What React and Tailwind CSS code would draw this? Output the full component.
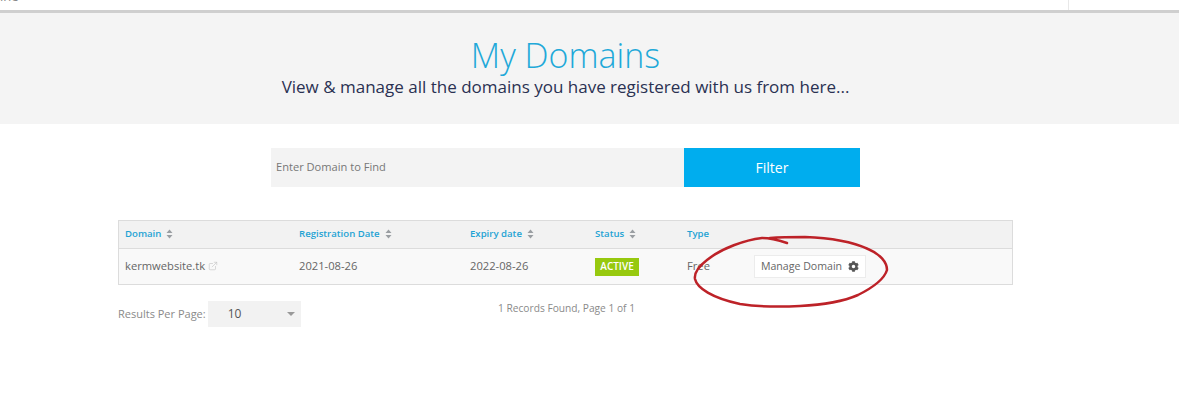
import { ExternalLink } from "lucide-react";
import { FaCog } from "react-icons/fa";

function SortIcon() {
  return (
    <svg width="7" height="10" viewBox="0 0 7 10" className="ml-[5px] inline-block">
      <path d="M3.5 0.5 L6.5 4 H0.5 Z M3.5 9.5 L6.5 6 H0.5 Z" fill="#9a9ea2" />
    </svg>
  );
}

function HeadCell({ label, sort = true, className }) {
  return (
    <div className={`flex items-center text-[9.6px] font-semibold text-[#1fa3d4] ${className}`}>
      {label}
      {sort && <SortIcon />}
    </div>
  );
}

export default function App() {
  return (
    <div className="relative h-[400px] w-[1179px] overflow-hidden bg-white font-['Open_Sans',sans-serif]">
      <div className="flex h-[10px] justify-end overflow-hidden bg-white">
        <span className="absolute left-0 top-[-13px] text-[13px] text-[#888]">ine</span>
        <div className="mr-[110px] w-px bg-[#e8e8e8]" />
      </div>
      <div className="h-[3px] bg-[#cfcfcf]" />

      <div className="h-[111px] bg-[#f4f4f4]">
        <div className="ml-[118px] w-[895px] pt-[19px] text-center">
          <h1 className="text-[34px] font-light leading-[46px] text-[#1fa9d9]">My Domains</h1>
          <p className="text-[17px] leading-[18px] text-[#2a3152]">
            View &amp; manage all the domains you have registered with us from here...
          </p>
        </div>
      </div>

      <div className="ml-[271px] mt-[24px] flex h-[39px] w-[589px]">
        <div className="flex w-[413px] items-center bg-[#f3f3f3] pl-[5px] text-[11.1px] text-[#777]">
          Enter Domain to Find
        </div>
        <div className="flex flex-1 items-center justify-center bg-[#00adee] text-[14px] text-white">
          Filter
        </div>
      </div>

      <div className="ml-[118px] mt-[33px] w-[895px] border border-[#dcdcdc]">
        <div className="flex h-[28px] items-center border-b border-[#dcdcdc] bg-[#f2f2f2]">
          <HeadCell label="Domain" className="ml-[6px] w-[174px]" />
          <HeadCell label="Registration Date" className="w-[171px]" />
          <HeadCell label="Expiry date" className="w-[125px]" />
          <HeadCell label="Status" className="w-[92px]" />
          <HeadCell label="Type" sort={false} />
        </div>
        <div className="flex h-[35px] items-center bg-[#f9f9f9] text-[11.2px] text-[#666]">
          <div className="ml-[6px] flex w-[174px] items-center">
            kermwebsite.tk
            <ExternalLink size={10} strokeWidth={1.5} className="ml-[3px] text-[#c4c4c4]" />
          </div>
          <div className="w-[171px]">2021-08-26</div>
          <div className="w-[125px]">2022-08-26</div>
          <div className="w-[92px]">
            <span className="inline-flex h-[18px] w-[44px] items-center justify-center bg-[#97c90f] text-[10px] font-semibold text-white">
              ACTIVE
            </span>
          </div>
          <div className="w-[67px]">Free</div>
          <div className="flex h-[23px] w-[112px] items-center justify-center gap-[6px] border border-[#ececec] bg-white text-[10.6px]">
            Manage Domain
            <FaCog size={11} className="text-[#555]" />
          </div>
        </div>
      </div>

      <div className="ml-[118px] mt-[16px] flex w-[895px] items-start">
        <div className="flex h-[26px] w-[183px] shrink-0 items-center">
          <span className="whitespace-nowrap text-[11px] text-[#8a8a8a]">Results Per Page:</span>
          <div className="ml-[2px] flex h-[26px] w-[93px] shrink-0 items-center justify-between bg-[#f2f2f2] pl-[20px] pr-[6px] text-[12px] text-[#555]">
            10
            <span className="h-0 w-0 border-x-[4px] border-t-[4px] border-x-transparent border-t-[#999]" />
          </div>
        </div>
        <div className="ml-[197px] text-[10.2px] leading-[15px] text-[#8a8a8a]">1 Records Found, Page 1 of 1</div>
      </div>

      <svg className="absolute left-0 top-0" width="1179" height="400" fill="none">
        <path
          d="M787 243 C778 240 772 238 762 238 C745 240 722 248 707 260 C698 267 694 273 695 279 C697 288 712 298 740 304 C760 307 780 307 800 306 C822 305 842 302 858 295 C872 288 884 280 887 270 C887 262 880 254 868 249 C855 243 835 238 805 237 C793 237 782 237 770 238"
          stroke="#bd2228"
          strokeWidth="2.5"
          strokeLinecap="round"
        />
      </svg>
    </div>
  );
}
